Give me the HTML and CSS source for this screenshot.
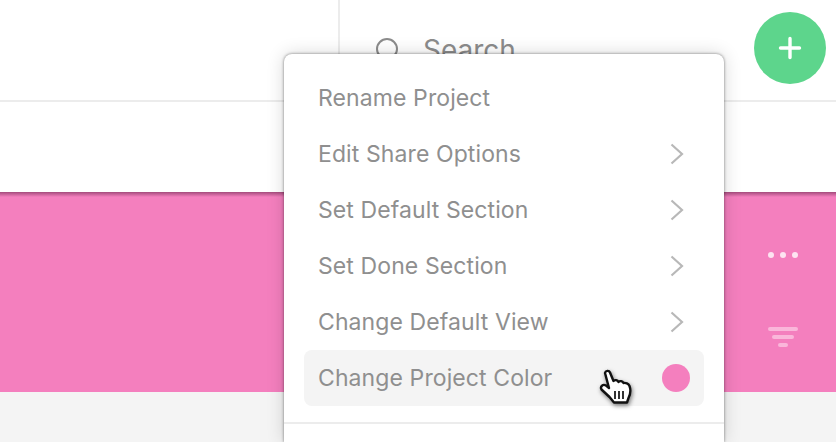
FILE: index.html
```html
<!DOCTYPE html>
<html lang="en">
<head>
  <meta charset="UTF-8">
  <meta name="viewport" content="width=device-width, initial-scale=1.0">
  <title>Project Menu</title>
  <link rel="stylesheet" href="styles.css">
</head>
<body>
  <!-- Top Bar -->
  <header class="topbar">
    <div class="topbar-left"></div>
    <div class="search">
      <svg class="search-icon" width="26" height="26" viewBox="0 0 26 26" fill="none" stroke="#8c8c8c" stroke-width="2">
        <circle cx="12" cy="12" r="10"/>
        <path d="M19 19L25 25"/>
      </svg>
      <span class="search-text">Search</span>
    </div>
    <button class="add-button">
      <svg width="24" height="24" viewBox="0 0 24 24" stroke="#fff" stroke-width="3.4" stroke-linecap="round">
        <path d="M12 2.5V21.5M2.5 12H21.5"/>
      </svg>
    </button>
  </header>

  <!-- Sub Bar -->
  <div class="subbar"></div>

  <!-- Project Banner -->
  <section class="banner">
    <div class="dots"><i></i><i></i><i></i></div>
    <div class="filter"><i></i><i></i><i></i></div>
  </section>

  <!-- Page Body -->
  <div class="content"></div>

  <!-- Project Menu -->
  <div class="menu">
    <div class="menu-item">Rename Project</div>
    <div class="menu-item">Edit Share Options
      <svg class="chevron" width="14" height="22" viewBox="0 0 14 22"><path d="M1.5 1.5L12 11L1.5 20.5"/></svg>
    </div>
    <div class="menu-item">Set Default Section
      <svg class="chevron" width="14" height="22" viewBox="0 0 14 22"><path d="M1.5 1.5L12 11L1.5 20.5"/></svg>
    </div>
    <div class="menu-item">Set Done Section
      <svg class="chevron" width="14" height="22" viewBox="0 0 14 22"><path d="M1.5 1.5L12 11L1.5 20.5"/></svg>
    </div>
    <div class="menu-item">Change Default View
      <svg class="chevron" width="14" height="22" viewBox="0 0 14 22"><path d="M1.5 1.5L12 11L1.5 20.5"/></svg>
    </div>
    <div class="menu-item active">Change Project Color
      <span class="color-dot"></span>
    </div>
    <div class="menu-divider"></div>
  </div>

  <!-- Mouse Cursor -->
  <svg class="cursor" width="36" height="38" viewBox="0 0 36 38">
    <path d="M7 5C7.5 2.5 11 2 12 4.5L15.5 13C17 11.5 19.5 12 20.5 14C22 12.5 24.5 13 25.5 15C27.5 14.5 30.5 15.5 31.5 18C33 22 32 27 30.5 30L29 34.5H16L11.5 29L3.5 21.5C2 19 4.5 15.5 8 17.5L11 20Z" fill="#fff" stroke="#111" stroke-width="2.4" stroke-linejoin="round"/>
    <path d="M17 23V31M21 23V31M25 23V31" stroke="#333" stroke-width="2"/>
  </svg>
</body>
</html>
```

FILE: styles.css
```css
/* General Reset */
* {
  margin: 0;
  padding: 0;
  box-sizing: border-box;
}

body {
  width: 836px;
  height: 442px;
  overflow: hidden;
  position: relative;
  background: #fff;
  font-family: 'Inter', 'Liberation Sans', sans-serif;
}

/* Top Bar */
.topbar {
  height: 102px;
  display: flex;
  align-items: flex-start;
  border-bottom: 2px solid #ececec;
}

.topbar-left {
  width: 340px;
  height: 100px;
  border-right: 2px solid #ececec;
}

.search {
  flex: 1;
  display: flex;
  align-items: center;
  gap: 22px;
  height: 100px;
  padding-left: 35px;
}

.search-text {
  font-size: 28px;
  color: #8c8c8c;
}

.add-button {
  width: 72px;
  height: 72px;
  margin: 12px 10px 0 0;
  border: none;
  border-radius: 50%;
  background: #5dd58c;
  display: flex;
  justify-content: center;
  align-items: center;
}

/* Sub Bar */
.subbar {
  height: 90px;
}

/* Project Banner */
.banner {
  height: 200px;
  background: linear-gradient(rgba(110, 40, 80, 0.6), rgba(110, 40, 80, 0) 5px), #f47fbe;
  display: flex;
  flex-direction: column;
  align-items: flex-end;
  padding: 60px 38px 0 0;
}

.dots {
  display: flex;
  gap: 6px;
}

.dots i {
  width: 6px;
  height: 6px;
  border-radius: 50%;
  background: #fde3f1;
}

.filter {
  display: flex;
  flex-direction: column;
  align-items: center;
  gap: 4px;
  margin-top: 69px;
}

.filter i {
  height: 4px;
  border-radius: 2px;
  background: #fab6da;
}

.filter i:nth-child(1) {
  width: 30px;
}

.filter i:nth-child(2) {
  width: 22px;
}

.filter i:nth-child(3) {
  width: 10px;
}

/* Page Body */
.content {
  height: 50px;
  background: #f4f4f4;
}

/* Project Menu */
.menu {
  position: absolute;
  left: 284px;
  top: 54px;
  width: 440px;
  height: 388px;
  padding: 16px 20px;
  background: #fff;
  border-radius: 8px 8px 0 0;
  box-shadow: 0 0 3px rgba(0, 0, 0, 0.5), 0 0 18px rgba(0, 0, 0, 0.16);
}

.menu-item {
  height: 56px;
  padding: 0 14px;
  display: flex;
  justify-content: space-between;
  align-items: center;
  border-radius: 8px;
  font-size: 23px;
  letter-spacing: 0.1px;
  color: #8f8f8f;
}

.menu-item.active {
  background: #f4f4f4;
}

.chevron {
  margin-right: 6px;
  fill: none;
  stroke: #b8b8b8;
  stroke-width: 2.2;
}

.color-dot {
  width: 28px;
  height: 28px;
  border-radius: 50%;
  background: #f47fbe;
}

.menu-divider {
  height: 2px;
  margin: 16px -20px 0;
  background: #ececec;
}

/* Mouse Cursor */
.cursor {
  position: absolute;
  left: 598px;
  top: 368px;
  filter: drop-shadow(1px 2px 2px rgba(0, 0, 0, 0.5));
}
```
